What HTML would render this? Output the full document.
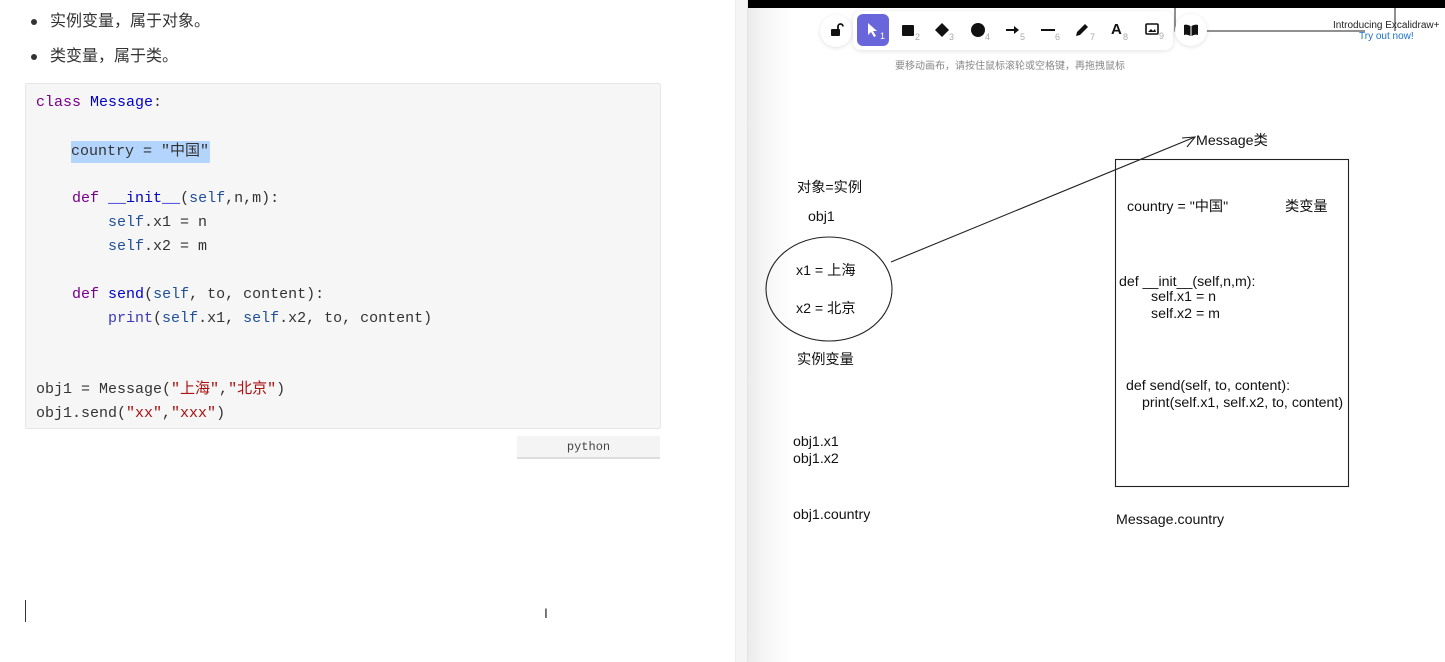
<!DOCTYPE html>
<html><head><meta charset="utf-8"><style>
*{margin:0;padding:0;box-sizing:border-box}
body{width:1445px;height:662px;position:relative;overflow:hidden;background:#fff;font-family:"Liberation Sans","Noto Sans CJK SC",sans-serif}
.a{position:absolute;white-space:pre}
.code{position:absolute;left:25px;top:83px;width:636px;height:346px;background:#f6f6f6;border:1px solid #e6e6e6;border-radius:2px}
.cl{position:absolute;left:10px;font-family:"Liberation Mono","Noto Sans CJK SC",monospace;font-size:15px;line-height:20px;color:#333;white-space:pre}
.k{color:#770088}.d{color:#0000cc}.s{color:#aa1111}.b{color:#1f4f99}.p{color:#3a3ab5}
.t{position:absolute;font-size:14.2px;line-height:18px;color:#111;white-space:pre}
.n{position:absolute;font-size:9px;color:#aaa}
.dot{position:absolute;left:31px;width:6px;height:6px;border-radius:3px;background:#333}
</style></head><body>
<div class="dot" style="top:19px"></div>
<div class="a" style="left:50px;top:12px;font-size:16px;line-height:20px;color:#333">实例变量，属于对象。</div>
<div class="dot" style="top:54px"></div>
<div class="a" style="left:50px;top:47px;font-size:16px;line-height:20px;color:#333">类变量，属于类。</div>
<div class="code">
<div class="cl" style="top:9px"><span class="k">class</span> <span class="d">Message</span>:</div>
<div class="cl" style="top:57px;left:45px;background:#b3d4fc;padding-right:1px;padding-top:1px;padding-bottom:1px">country = "中国"</div>
<div class="cl" style="top:105px">    <span class="k">def</span> <span class="d">__init__</span>(<span class="b">self</span>,n,m):</div>
<div class="cl" style="top:129px">        <span class="b">self</span>.x1 = n</div>
<div class="cl" style="top:153px">        <span class="b">self</span>.x2 = m</div>
<div class="cl" style="top:201px">    <span class="k">def</span> <span class="d">send</span>(<span class="b">self</span>, to, content):</div>
<div class="cl" style="top:225px">        <span class="p">print</span>(<span class="b">self</span>.x1, <span class="b">self</span>.x2, to, content)</div>
<div class="cl" style="top:296px">obj1 = Message(<span class="s">"上海"</span>,<span class="s">"北京"</span>)</div>
<div class="cl" style="top:320px">obj1.send(<span class="s">"xx"</span>,<span class="s">"xxx"</span>)</div>
</div>
<div class="a" style="left:517px;top:436px;width:143px;height:23px;background:#f4f4f4;border-bottom:2px solid #ddd;font-family:'Liberation Mono',monospace;font-size:12px;line-height:22px;text-align:center;color:#444">python</div>
<div class="a" style="left:25px;top:600px;width:1px;height:22px;background:#333"></div>
<div class="a" style="left:544px;top:605px;font-size:14px;color:#333">I</div>
<div class="a" style="left:735px;top:0;width:13px;height:662px;background:#f5f5f5;border-left:1px solid #ececec;border-right:1px solid #e4e4e4"></div>
<div class="a" style="left:748px;top:0;width:697px;height:662px;background:linear-gradient(90deg,#ebebeb,#f6f6f6 18px,#fff 45px)"></div>
<div class="a" style="left:748px;top:0;width:697px;height:8px;background:#000"></div>
<svg class="a" style="left:748px;top:0" width="697" height="662">
<path d="M427 8 V31 H617 M647 8 V31" stroke="#222" fill="none" stroke-width="1"/>
<path d="M143 262 L447 137" stroke="#222" stroke-width="1.1" fill="none"/>
<path d="M434 138 L447 137 L439 147" stroke="#222" stroke-width="1.1" fill="none"/>
<ellipse cx="81" cy="289" rx="63" ry="52" fill="none" stroke="#222" stroke-width="1.1"/>
<rect x="367.5" y="159.5" width="233" height="327" fill="none" stroke="#222" stroke-width="1.1"/>
</svg>
<div class="a" style="left:820px;top:15px;width:32px;height:32px;border-radius:16px;background:#fff;box-shadow:0 1px 4px rgba(0,0,0,.12)"></div>
<svg class="a" style="left:828px;top:22px" width="16" height="16"><rect x="3" y="7" width="9" height="7" rx="1" fill="#111"/><path d="M10 7V4.5a2.5 2.5 0 0 1 5 0" stroke="#111" stroke-width="1.8" fill="none"/></svg>
<div class="a" style="left:853px;top:11px;width:320px;height:39px;background:#fff;border-radius:8px;box-shadow:0 1px 5px rgba(0,0,0,.12)"></div>
<div class="a" style="left:857px;top:14px;width:32px;height:32px;border-radius:6px;background:#6965db"></div>
<svg class="a" style="left:866px;top:22px" width="12" height="16"><path d="M2 1 L2 13 L5 10 L8 15 L10 14 L7 9 L11 9 Z" fill="#fff"/></svg>
<div class="n" style="left:880px;top:31px;color:#fff">1</div>
<div class="a" style="left:902px;top:25px;width:12px;height:11px;background:#111;border-radius:1px"></div><div class="n" style="left:915px;top:32px">2</div>
<svg class="a" style="left:935px;top:23px" width="14" height="14"><path d="M7 0 L14 7 L7 14 L0 7Z" fill="#111"/></svg><div class="n" style="left:949px;top:32px">3</div>
<div class="a" style="left:971px;top:23px;width:14px;height:14px;border-radius:7px;background:#111"></div><div class="n" style="left:985px;top:32px">4</div>
<svg class="a" style="left:1006px;top:25px" width="14" height="10"><path d="M0 5 H10" stroke="#111" stroke-width="2"/><path d="M8 1 L13 5 L8 9Z" fill="#111"/></svg><div class="n" style="left:1020px;top:32px">5</div>
<div class="a" style="left:1041px;top:29px;width:14px;height:2px;background:#111"></div><div class="n" style="left:1055px;top:32px">6</div>
<svg class="a" style="left:1074px;top:22px" width="16" height="16"><path d="M2 14 L3 10 L11 2 L14 5 L6 13Z" fill="#111"/></svg><div class="n" style="left:1090px;top:32px">7</div>
<div class="a" style="left:1111px;top:21px;font-size:15px;font-weight:bold;color:#111">A</div><div class="n" style="left:1123px;top:32px">8</div>
<svg class="a" style="left:1145px;top:23px" width="14" height="12"><rect x="1" y="1" width="12" height="10" rx="1" fill="none" stroke="#111" stroke-width="1.6"/><path d="M3 9 L6 6 L8 8 L10 6 L11 9Z" fill="#111"/></svg><div class="n" style="left:1159px;top:31px">9</div>
<div class="a" style="left:1175px;top:14px;width:32px;height:32px;border-radius:16px;background:#fff;box-shadow:0 1px 4px rgba(0,0,0,.12)"></div>
<svg class="a" style="left:1183px;top:24px" width="16" height="13"><path d="M1 1 Q4 0 7.5 2 V12 Q4 10 1 11Z M8.5 2 Q12 0 15 1 V11 Q12 10 8.5 12Z" fill="#111"/></svg>
<div class="a" style="left:1333px;top:20px;font-size:10px;color:#222">Introducing Excalidraw+</div>
<div class="a" style="left:1359px;top:31px;font-size:10px;color:#1a73c9">Try out now!</div>
<div class="a" style="left:895px;top:57px;font-size:10px;color:#888">要移动画布，请按住鼠标滚轮或空格键，再拖拽鼠标</div>
<div class="t" style="left:1196px;top:132px">Message类</div>
<div class="t" style="left:797px;top:179px">对象=实例</div>
<div class="t" style="left:808px;top:208px">obj1</div>
<div class="t" style="left:796px;top:262px">x1 = 上海</div>
<div class="t" style="left:796px;top:300px">x2 = 北京</div>
<div class="t" style="left:797px;top:351px">实例变量</div>
<div class="t" style="left:793px;top:434px;line-height:17px">obj1.x1
obj1.x2</div>
<div class="t" style="left:793px;top:506px">obj1.country</div>
<div class="t" style="left:1127px;top:198px">country = "中国"</div>
<div class="t" style="left:1285px;top:198px">类变量</div>
<div class="t" style="left:1119px;top:273px">def __init__(self,n,m):</div>
<div class="t" style="left:1151px;top:289px;line-height:17px">self.x1 = n
self.x2 = m</div>
<div class="t" style="left:1126px;top:377px">def send(self, to, content):</div>
<div class="t" style="left:1142px;top:394px">print(self.x1, self.x2, to, content)</div>
<div class="t" style="left:1116px;top:511px">Message.country</div>
</body></html>
